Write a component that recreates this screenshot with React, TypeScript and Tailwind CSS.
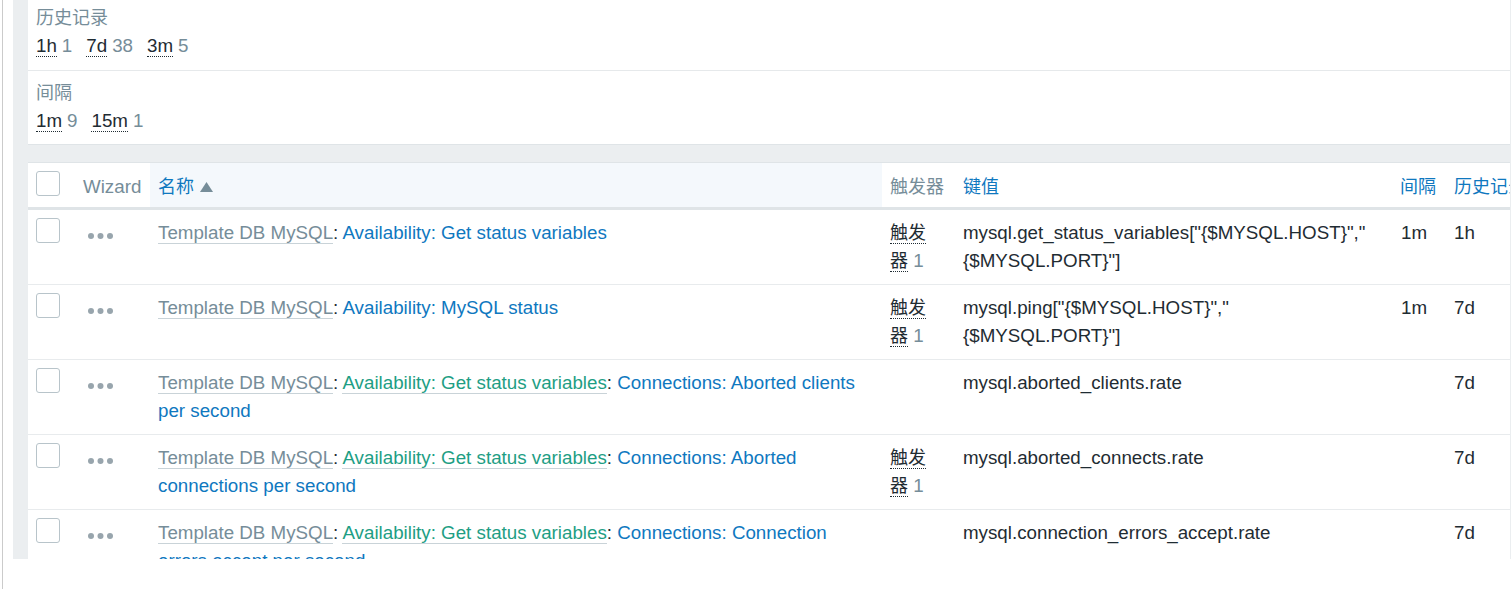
import React from "react";

const Tpl = ({ children }: { children: React.ReactNode }) => (
  <span className="text-[#768d99] border-b border-[#c9d3d8]">{children}</span>
);
const Green = ({ children }: { children: React.ReactNode }) => (
  <span className="text-[#1e9e84] border-b border-[#c9d3d8]">{children}</span>
);
const Blue = ({ children }: { children: React.ReactNode }) => (
  <span className="text-[#0f78bf]">{children}</span>
);

const Checkbox = () => (
  <div className="w-[24px] h-[25px] rounded-[3px] border border-[#b8c4ca] bg-white" />
);

const Dots = () => (
  <svg width="26" height="6" viewBox="0 0 26 6">
    <circle cx="3" cy="3" r="3" fill="#98a5ad" />
    <circle cx="12.5" cy="3" r="3" fill="#98a5ad" />
    <circle cx="22" cy="3" r="3" fill="#98a5ad" />
  </svg>
);

const Trigger = () => (
  <div className="w-[40px] text-[18px]">
    <span className="text-[#1f2c33] border-b border-dotted border-[#1f2c33]">触发器</span>
    <span className="text-[#768d99] text-[18.75px]"> 1</span>
  </div>
);

type Row = {
  name: React.ReactNode;
  trigger: boolean;
  key: React.ReactNode;
  interval: string;
  history: string;
};

const rows: Row[] = [
  {
    name: (
      <>
        <Tpl>Template DB MySQL</Tpl>: <Blue>Availability: Get status variables</Blue>
      </>
    ),
    trigger: true,
    key: (
      <>
        mysql.get_status_variables["{"{"}$MYSQL.HOST{"}"}","
        <br />
        {"{"}$MYSQL.PORT{"}"}"]
      </>
    ),
    interval: "1m",
    history: "1h",
  },
  {
    name: (
      <>
        <Tpl>Template DB MySQL</Tpl>: <Blue>Availability: MySQL status</Blue>
      </>
    ),
    trigger: true,
    key: (
      <>
        mysql.ping["{"{"}$MYSQL.HOST{"}"}","
        <br />
        {"{"}$MYSQL.PORT{"}"}"]
      </>
    ),
    interval: "1m",
    history: "7d",
  },
  {
    name: (
      <>
        <Tpl>Template DB MySQL</Tpl>: <Green>Availability: Get status variables</Green>:{" "}
        <Blue>Connections: Aborted clients per second</Blue>
      </>
    ),
    trigger: false,
    key: <>mysql.aborted_clients.rate</>,
    interval: "",
    history: "7d",
  },
  {
    name: (
      <>
        <Tpl>Template DB MySQL</Tpl>: <Green>Availability: Get status variables</Green>:{" "}
        <Blue>Connections: Aborted connections per second</Blue>
      </>
    ),
    trigger: true,
    key: <>mysql.aborted_connects.rate</>,
    interval: "",
    history: "7d",
  },
  {
    name: (
      <>
        <Tpl>Template DB MySQL</Tpl>: <Green>Availability: Get status variables</Green>:{" "}
        <Blue>Connections: Connection errors accept per second</Blue>
      </>
    ),
    trigger: false,
    key: <>mysql.connection_errors_accept.rate</>,
    interval: "",
    history: "7d",
  },
];

const FilterValue = ({ v, c }: { v: string; c: string }) => (
  <span className="whitespace-nowrap">
    <span className="text-[#1f2c33] border-b border-dotted border-[#1f2c33]">{v}</span>
    <span className="text-[#768d99] ml-[5px]">{c}</span>
  </span>
);

const cols = "grid grid-cols-[47px_75px_732px_73px_437px_54px_200px] w-max";

export default function App() {
  return (
    <div className="flex h-[589px] w-[1511px] bg-white overflow-hidden font-['Liberation_Sans','Noto_Sans_CJK_SC',sans-serif] text-[18.75px] leading-[28px] text-[#1f2c33]">
      <div className="w-[2px] shrink-0" />
      <div className="w-px shrink-0 bg-[#cbcbcb]" />
      <div className="w-[10px] shrink-0" />
      <div className="flex-1 h-[559px] bg-[#ebeef0] pl-[15px] pr-px overflow-hidden flex flex-col">
        {/* Filter card */}
        <div className="bg-white border-b border-[#dfe4e7] shrink-0">
          <div className="pl-[8px] pt-[4px] pb-[10px] border-b border-[#e6e9eb]">
            <div className="text-[#768d99] text-[18px]">历史记录</div>
            <div className="flex gap-[14px]">
              <FilterValue v="1h" c="1" />
              <FilterValue v="7d" c="38" />
              <FilterValue v="3m" c="5" />
            </div>
          </div>
          <div className="pl-[8px] pt-[8px] pb-[9px]">
            <div className="text-[#768d99] text-[18px]">间隔</div>
            <div className="flex gap-[14px]">
              <FilterValue v="1m" c="9" />
              <FilterValue v="15m" c="1" />
            </div>
          </div>
        </div>

        {/* Table card */}
        <div className="mt-[17px] bg-white border-t border-[#dfe4e7] overflow-hidden flex-1">
          <div className={`${cols} h-[47px] border-b-[3px] border-[#dfe4e7]`}>
            <div className="pl-[8px] pt-[8px]">
              <Checkbox />
            </div>
            <div className="pl-[8px] pt-[10px] text-[#768d99]">Wizard</div>
            <div className="pl-[8px] pt-[10px] bg-[#f4f8fc] flex items-start">
              <span className="text-[#0f78bf] text-[18px]">名称</span>
              <svg width="13" height="10" viewBox="0 0 13 10" className="ml-[6px] mt-[9px]">
                <path d="M6.5 0 L13 10 L0 10 Z" fill="#768d99" />
              </svg>
            </div>
            <div className="pl-[8px] pt-[10px] text-[#768d99] text-[18px] whitespace-nowrap">触发器</div>
            <div className="pl-[8px] pt-[10px] text-[#0f78bf] text-[18px]">键值</div>
            <div className="pl-[8px] pt-[10px] text-[#0f78bf] text-[18px] whitespace-nowrap">间隔</div>
            <div className="pl-[8px] pt-[10px] text-[#0f78bf] text-[18px] whitespace-nowrap">历史记录</div>
          </div>

          {rows.map((r, i) => (
            <div key={i} className={`${cols} border-b border-[#e8ebed]`}>
              <div className="pl-[8px] pt-[8px]">
                <Checkbox />
              </div>
              <div className="pl-[13px] pt-[23px]">
                <Dots />
              </div>
              <div className="px-[8px] py-[9px]">{r.name}</div>
              <div className="pl-[8px] py-[9px]">{r.trigger ? <Trigger /> : null}</div>
              <div className="px-[8px] py-[9px] whitespace-nowrap">{r.key}</div>
              <div className="pl-[9px] py-[9px]">{r.interval}</div>
              <div className="pl-[8px] py-[9px]">{r.history}</div>
            </div>
          ))}
        </div>
      </div>
    </div>
  );
}
